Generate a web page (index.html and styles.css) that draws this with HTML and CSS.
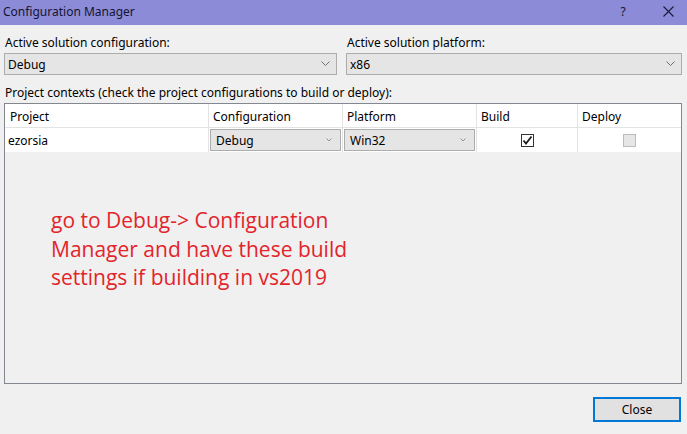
FILE: index.html
```html
<!DOCTYPE html>
<html>
<head>
<meta charset="utf-8">
<link rel="stylesheet" href="styles.css">
</head>
<body>
<div class="window">
  <div class="titlebar">
    <span class="title">Configuration Manager</span>
    <span class="tb-btn help">?</span>
    <span class="tb-btn close">
      <svg width="11" height="11" viewBox="0 0 11 11"><path d="M0.5 0.5 L10.5 10.5 M10.5 0.5 L0.5 10.5" stroke="#1a1a3a" stroke-width="1.1" fill="none"/></svg>
    </span>
  </div>
  <div class="content">
    <div class="top-row">
      <div class="field left">
        <div class="label">Active solution configuration:</div>
        <div class="combo"><span>Debug</span><svg class="chev" width="9" height="6" viewBox="0 0 9 6"><path d="M0.5 0.5 L4.5 4.5 L8.5 0.5" stroke="#707070" fill="none"/></svg></div>
      </div>
      <div class="field right">
        <div class="label">Active solution platform:</div>
        <div class="combo"><span>x86</span><svg class="chev" width="9" height="6" viewBox="0 0 9 6"><path d="M0.5 0.5 L4.5 4.5 L8.5 0.5" stroke="#707070" fill="none"/></svg></div>
      </div>
    </div>
    <div class="label ctx">Project contexts (check the project configurations to build or deploy):</div>
    <div class="grid">
      <div class="row head">
        <div class="c c1">Project</div>
        <div class="c c2">Configuration</div>
        <div class="c c3">Platform</div>
        <div class="c c4">Build</div>
        <div class="c c5">Deploy</div>
      </div>
      <div class="row data">
        <div class="c c1">ezorsia</div>
        <div class="c c2"><div class="mini"><span>Debug</span><svg class="chev small" width="6" height="4" viewBox="0 0 6 4"><path d="M0.5 0.5 L3 3 L5.5 0.5" stroke="#909090" fill="none"/></svg></div></div>
        <div class="c c3"><div class="mini"><span>Win32</span><svg class="chev small" width="6" height="4" viewBox="0 0 6 4"><path d="M0.5 0.5 L3 3 L5.5 0.5" stroke="#909090" fill="none"/></svg></div></div>
        <div class="c c4 center"><div class="check on"><svg width="11" height="11" viewBox="0 0 11 11"><path d="M1.5 5.5 L4 8.5 L9.5 1.5" stroke="#1a1a1a" stroke-width="1.8" fill="none"/></svg></div></div>
        <div class="c c5 center"><div class="check off"></div></div>
      </div>
      <div class="note">go to Debug-&gt; Configuration<br>Manager and have these build<br>settings if building in vs2019</div>
    </div>
    <div class="footer">
      <div class="button">Close</div>
    </div>
  </div>
</div>
</body>
</html>
```

FILE: styles.css
```css
* { box-sizing: border-box; }
html, body { margin: 0; padding: 0; }
body {
  width: 687px;
  height: 434px;
  background: #f0f0f0;
  font-family: "Noto Sans", "Open Sans", sans-serif;
  font-size: 12px;
  color: #000;
  overflow: hidden;
}
.window { width: 687px; height: 434px; display: flex; flex-direction: column; }
.titlebar {
  height: 25px;
  background: #8b8bd7;
  display: flex;
  align-items: center;
  padding-left: 3px;
  padding-bottom: 2px;
  color: #141432;
}
.title { flex: 1; font-size: 12px; }
.tb-btn { display: flex; align-items: center; justify-content: center; }
.help { width: 12px; margin-right: 34px; font-size: 12px; }
.close { width: 11px; margin-right: 13px; }
.content { padding: 0 5px 0 4px; flex: 1; display: flex; flex-direction: column; }
.top-row { display: flex; gap: 9px; margin-top: 9px; }
.field { display: flex; flex-direction: column; }
.field.left { width: 333px; }
.field.right { flex: 1; }
.label { height: 18px; line-height: 18px; padding-left: 1px; }
.combo {
  height: 22px;
  border: 1px solid #acacac;
  background: #e5e5e5;
  display: flex;
  align-items: center;
  justify-content: space-between;
  padding: 0 6px 0 3px;
  margin-top: 1px;
}
.ctx { margin-top: 9px; }
.grid {
  margin-top: 1px;
  height: 281px;
  border: 1px solid #828790;
  background: #f0f0f0;
  display: flex;
  flex-direction: column;
}
.row { display: flex; background: #fff; flex-shrink: 0; }
.row.head { height: 24px; border-bottom: 1px solid #e3e3e3; }
.row.head .c { padding-top: 2px; }
.row.data { height: 25px; border-bottom: 1px solid #f0f0f0; }
.c { display: flex; align-items: center; border-right: 1px solid #e3e3e3; padding-left: 4px; }
.c1 { width: 204px; }
.c2 { width: 134px; padding-left: 1px; }
.c3 { width: 134px; padding-left: 1px; }
.c4 { width: 101px; }
.c5 { flex: 1; border-right: none; }
.head .c2, .head .c3 { padding-left: 4px; }
.head .c1 { padding-left: 5px; }
.data .c1 { padding-left: 3px; }
.center { justify-content: center; padding-left: 0; }
.mini {
  width: 131px;
  height: 22px;
  border: 1px solid #acacac;
  background: #e5e5e5;
  display: flex;
  align-items: center;
  justify-content: space-between;
  padding: 0 8px 0 5px;
}
.check { width: 13px; height: 13px; border: 1px solid #333; background: #fff; display: flex; align-items: center; justify-content: center; }
.check.off { border-color: #bcbcbc; background: #e6e6e6; }
.note {
  margin: 53px 0 0 46px;
  font-family: "Open Sans", "Noto Sans", sans-serif;
  font-size: 21px;
  line-height: 28.5px;
  color: #e3242b;
}
.footer { display: flex; justify-content: flex-end; margin-top: 13px; padding-right: 1px; }
.button {
  width: 88px;
  height: 25px;
  border: 2px solid #0078d7;
  background: #e1e1e1;
  display: flex;
  align-items: center;
  justify-content: center;
}
```
